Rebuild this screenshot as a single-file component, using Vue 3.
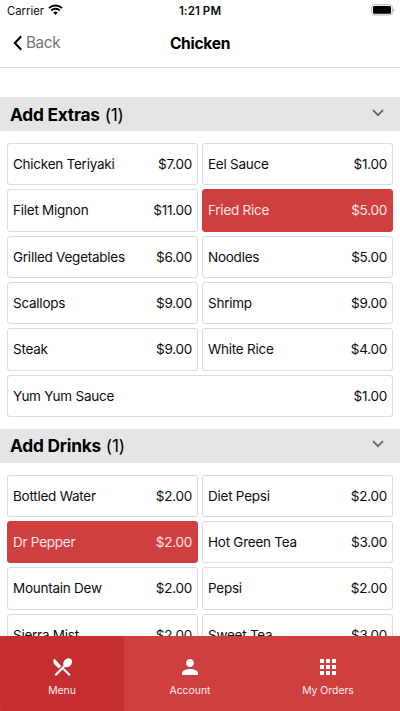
<template>
  <div class="screen">
    <div class="status-bar">
      <div class="carrier">
        <span>Carrier</span>
        <svg width="15" height="11" viewBox="0 0 15 11" aria-hidden="true">
          <path d="M1 4.1a9.3 9.3 0 0 1 13 0" />
          <path d="M3.3 6.5a6 6 0 0 1 8.4 0" />
          <path class="dot" d="M5.2 8.5a3.3 3.3 0 0 1 4.6 0L7.5 10.9z" />
        </svg>
      </div>
      <span class="time">1:21 PM</span>
      <svg class="battery" width="24" height="12" viewBox="0 0 24 12" aria-hidden="true">
        <rect x="0.7" y="0.7" width="20.6" height="10.3" rx="2.6" fill="#fff" stroke="#b3b3b3" />
        <rect x="2" y="2" width="18" height="7.7" rx="1.3" />
        <path d="M22.4 4.2q1.1.5 1.1 1.7t-1.1 1.7z" fill="#aaa" />
      </svg>
    </div>

    <header class="nav-bar">
      <button class="back" type="button">
        <svg width="10" height="16" viewBox="0 0 10 16" aria-hidden="true">
          <path d="M8.2 1.2 1.9 8l6.3 6.8" />
        </svg>
        <span>Back</span>
      </button>
      <h1>Chicken</h1>
    </header>

    <main class="content">
      <section v-for="group in groups" :key="group.title">
        <div class="group-header">
          <h2>{{ group.title }} <span>({{ selectedCount(group) }})</span></h2>
          <svg width="12" height="8" viewBox="0 0 12 8" aria-hidden="true">
            <path d="m1 1.2 5 5 5-5" />
          </svg>
        </div>
        <div class="options">
          <button
            v-for="item in group.items"
            :key="item.name"
            class="option"
            :class="{selected: item.selected, wide: item.wide}"
            type="button"
            @click="item.selected = !item.selected"
          >
            <span class="name">{{ item.name }}</span>
            <span class="price">${{ item.price.toFixed(2) }}</span>
          </button>
        </div>
      </section>
    </main>

    <nav class="tabs">
      <button
        v-for="tab in tabs"
        :key="tab.id"
        class="tab"
        :class="{active: tab.id === activeTab}"
        type="button"
        @click="activeTab = tab.id"
      >
        <svg width="24" height="24" viewBox="0 0 24 24" aria-hidden="true">
          <path :d="tab.icon" />
        </svg>
        <span>{{ tab.label }}</span>
      </button>
    </nav>
  </div>
</template>

<script setup>
import { reactive, ref } from 'vue'

const groups = reactive([
  {
    title: 'Add Extras',
    items: [
      { name: 'Chicken Teriyaki', price: 7 },
      { name: 'Eel Sauce', price: 1 },
      { name: 'Filet Mignon', price: 11 },
      { name: 'Fried Rice', price: 5, selected: true },
      { name: 'Grilled Vegetables', price: 6 },
      { name: 'Noodles', price: 5 },
      { name: 'Scallops', price: 9 },
      { name: 'Shrimp', price: 9 },
      { name: 'Steak', price: 9 },
      { name: 'White Rice', price: 4 },
      { name: 'Yum Yum Sauce', price: 1, wide: true }
    ]
  },
  {
    title: 'Add Drinks',
    items: [
      { name: 'Bottled Water', price: 2 },
      { name: 'Diet Pepsi', price: 2 },
      { name: 'Dr Pepper', price: 2, selected: true },
      { name: 'Hot Green Tea', price: 3 },
      { name: 'Mountain Dew', price: 2 },
      { name: 'Pepsi', price: 2 },
      { name: 'Sierra Mist', price: 2 },
      { name: 'Sweet Tea', price: 3 }
    ]
  }
])

const tabs = [
  {
    id: 'menu',
    label: 'Menu',
    icon: 'M4.2 3.6l7.1 7.4-2.6 2.6-3.9-3.9C3 7.9 2.8 5.4 4.2 3.6zM15 11.9L6 20.9l-1.5-1.5 9-9c-.8-1.9 0-4 1.4-5.4 2-2 5-2.2 6.300-.8 1.400 1.400 1.200 4.300-.8 6.300-1.400 1.400-3.500 2.200-5.400 1.400zM13.800 12.900l6.800 6.500-1.500 1.500-6.700-6.600z'
  },
  {
    id: 'account',
    label: 'Account',
    icon: 'M12 12c2.21 0 4-1.79 4-4s-1.79-4-4-4-4 1.79-4 4 1.79 4 4 4zm0 2c-2.67 0-8 1.34-8 4v2h16v-2c0-2.66-5.33-4-8-4z'
  },
  {
    id: 'orders',
    label: 'My Orders',
    icon: 'M4 8h4V4H4v4zm6 12h4v-4h-4v4zm-6 0h4v-4H4v4zm0-6h4v-4H4v4zm6 0h4v-4h-4v4zm6-10v4h4V4h-4zm-6 4h4V4h-4v4zm6 6h4v-4h-4v4zm0 6h4v-4h-4v4z'
  }
]

const activeTab = ref('menu')

function selectedCount(group) {
  return group.items.filter(item => item.selected).length
}
</script>

<style>
body {
  margin: 0;
  overflow: hidden;
}
</style>

<style scoped>
.screen {
  display: flex;
  flex-direction: column;
  height: 100vh;
  overflow: hidden;
  color: #0c0c0c;
  background: #fff;
  font-family: Inter, "Liberation Sans", sans-serif;
}

button {
  margin: 0;
  padding: 0;
  color: inherit;
  background: none;
  border: 0;
  font: inherit;
}

.status-bar {
  flex: none;
  display: grid;
  grid-template-columns: 1fr auto 1fr;
  align-items: center;
  height: 20px;
  padding: 0 5px;
  font-size: 11.3px;
}

.carrier {
  display: flex;
  align-items: center;
  gap: 4px;
  padding: 1px 0 0 2px;
}

.carrier svg {
  margin-bottom: 2px;
  fill: none;
  stroke: #000;
  stroke-width: 2;
}

.carrier .dot {
  fill: #000;
  stroke: none;
}

.time {
  padding-top: 1px;
  font-size: 11.5px;
  font-weight: 600;
  letter-spacing: 0.1px;
}

.battery {
  justify-self: end;
}

.nav-bar {
  flex: none;
  display: grid;
  grid-template-columns: 1fr auto 1fr;
  align-items: center;
  box-sizing: border-box;
  height: 48px;
  padding: 0 13px 2px;
  border-bottom: 1px solid #dedede;
}

.back {
  display: flex;
  align-items: center;
  gap: 3px;
  color: #747474;
  font-size: 15.3px;
  letter-spacing: -0.4px;
}

.back svg {
  fill: none;
  stroke: #000;
  stroke-width: 2.1;
}

h1 {
  margin: 0;
  padding-top: 2px;
  color: #000;
  font-size: 15.6px;
  font-weight: 700;
  letter-spacing: -0.3px;
}

.content {
  flex: 1;
  min-height: 0;
  padding-top: 29px;
  overflow: hidden;
}

.group-header {
  display: flex;
  align-items: center;
  justify-content: space-between;
  box-sizing: border-box;
  height: 34.3px;
  padding: 0 16px 0 10px;
  background: #e5e5e5;
}

.group-header svg {
  margin-bottom: 3px;
  fill: none;
  stroke: #666;
  stroke-width: 1.8;
}

h2 {
  margin: 0;
  color: #000;
  font-size: 17.3px;
  font-weight: 700;
  letter-spacing: -0.22px;
}

h2 span {
  margin-left: 1px;
  font-weight: 400;
}

.options {
  display: grid;
  grid-template-columns: 1fr 1fr;
  gap: 4px;
  padding: 11.7px 7px;
}

.option {
  display: flex;
  align-items: center;
  justify-content: space-between;
  box-sizing: border-box;
  height: 42.35px;
  padding: 0 5px 0.4px;
  border: 1px solid #dcdcdc;
  border-radius: 3px;
  font-size: 13.5px;
  letter-spacing: -0.25px;
}

.option.wide {
  grid-column: span 2;
}

.option.selected {
  color: #fbe6e6;
  background: #d03f40;
  border-color: #d03f40;
}

.tabs {
  flex: none;
  display: grid;
  grid-template-columns: 124px 132px 144px;
  height: 75px;
  color: #fff;
  background: #d03f40;
}

.tab {
  display: flex;
  flex-direction: column;
  align-items: center;
  padding-top: 19px;
  gap: 5px;
  font-size: 10.4px;
  line-height: 14px;
}

.tab span {
  color: #fdeeee;
}

.tab svg {
  fill: currentColor;
}

.tab.active {
  background: #c62f31;
  border-radius: 3px;
}
</style>
